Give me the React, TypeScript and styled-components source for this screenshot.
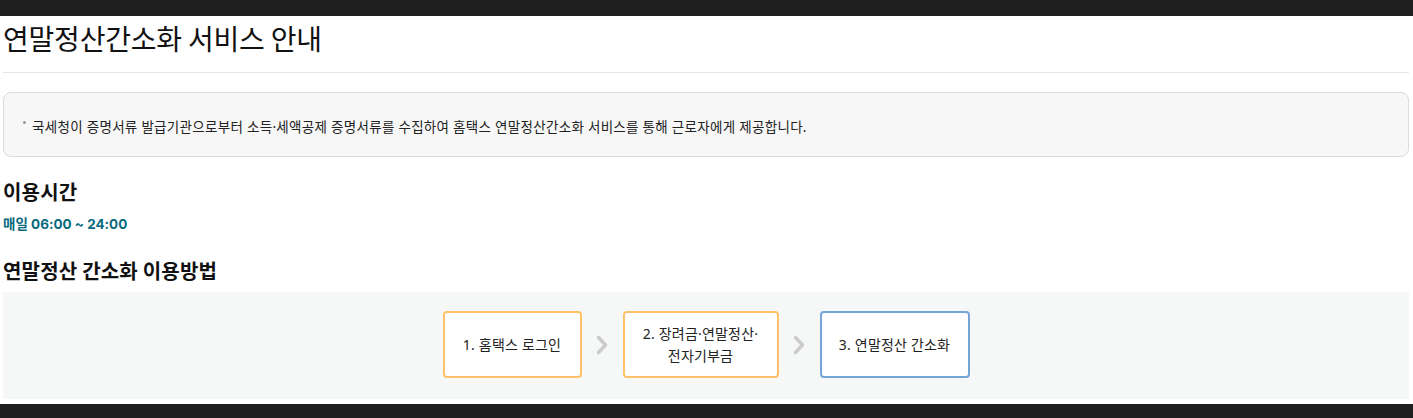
import React from "react";
import styled, { createGlobalStyle } from "styled-components";

const Global = createGlobalStyle`
  html, body { margin: 0; padding: 0; background: #fff; }
  body { font-family: "Noto Sans", "Noto Sans CJK KR", sans-serif; color: #111; }
`;

const DarkBar = styled.div<{ $h: number }>`
  height: ${(p) => p.$h}px;
  background: #1f1f1f;
`;

const Page = styled.main`
  padding: 0 4px 5px 3px;
  display: flex;
  flex-direction: column;
`;

const Title = styled.h1`
  margin: 0;
  font-family: "Noto Sans CJK KR", sans-serif;
  font-size: 28px;
  font-weight: 400;
  line-height: 44px;
  letter-spacing: -0.2px;
  padding-bottom: 12px;
  border-bottom: 1px solid #e6e6e8;
  color: #111;
`;

const Notice = styled.div`
  margin-top: 19px;
  height: 61px;
  box-sizing: content-box;
  border: 1px solid #dcdcdc;
  border-radius: 8px;
  background: #f7f7f7;
  display: flex;
  align-items: center;
  padding: 2px 0 0 19px;
  font-size: 13.5px;
  color: #222;
  letter-spacing: 0.3px;
`;

const Dot = styled.span`
  display: inline-block;
  width: 3px;
  height: 3px;
  border-radius: 50%;
  background: #999;
  margin: 0 6px 6px 0;
`;

const Heading = styled.h2<{ $top: number }>`
  margin: ${(p) => p.$top}px 0 0;
  font-family: "Noto Sans CJK KR", sans-serif;
  font-size: 20px;
  font-weight: 700;
  line-height: 28px;
  color: #111;
  letter-spacing: 0.2px;
`;

const Hours = styled.p`
  margin: 9px 0 0;
  font-family: Inter, "Noto Sans CJK KR", sans-serif;
  font-size: 13.5px;
  font-weight: 700;
  line-height: 18px;
  color: #0a6b80;
`;

const Flow = styled.div`
  margin-top: 7px;
  height: 107px;
  background: #f6f8f8;
  display: flex;
  align-items: flex-start;
  justify-content: center;
  padding-top: 19px;
  box-sizing: border-box;
`;

const Step = styled.div<{ $w: number; $color: string }>`
  width: ${(p) => p.$w}px;
  height: 67px;
  box-sizing: border-box;
  border: 2px solid ${(p) => p.$color};
  border-radius: 4px;
  background: #fff;
  display: flex;
  align-items: center;
  justify-content: center;
  text-align: center;
  font-size: 14px;
  line-height: 22px;
  color: #222;
  letter-spacing: 0.2px;
`;

const Arrow = styled.div`
  width: 41px;
  height: 67px;
  display: flex;
  align-items: center;
  justify-content: center;
`;

const Chevron = () => (
  <svg width="12" height="20" viewBox="0 0 12 20">
    <path d="M2.5 2.5 L9.5 10 L2.5 17.5" fill="none" stroke="#cbcbcb" strokeWidth="3.5" strokeLinecap="round" strokeLinejoin="round" />
  </svg>
);

export default function App() {
  return (
    <>
      <Global />
      <DarkBar $h={16} />
      <Page>
        <Title>연말정산간소화 서비스 안내</Title>
        <Notice>
          <Dot />
          국세청이 증명서류 발급기관으로부터 소득·세액공제 증명서류를 수집하여 홈택스 연말정산간소화 서비스를 통해 근로자에게 제공합니다.
        </Notice>
        <Heading $top={21}>이용시간</Heading>
        <Hours>매일 06:00 ~ 24:00</Hours>
        <Heading $top={24}>연말정산 간소화 이용방법</Heading>
        <Flow>
          <Step $w={139} $color="#ffc068">1. 홈택스 로그인</Step>
          <Arrow><Chevron /></Arrow>
          <Step $w={156} $color="#ffc068">
            2. 장려금·연말정산·
            <br />
            전자기부금
          </Step>
          <Arrow><Chevron /></Arrow>
          <Step $w={150} $color="#76a3d8">3. 연말정산 간소화</Step>
        </Flow>
      </Page>
      <DarkBar $h={20} />
    </>
  );
}
